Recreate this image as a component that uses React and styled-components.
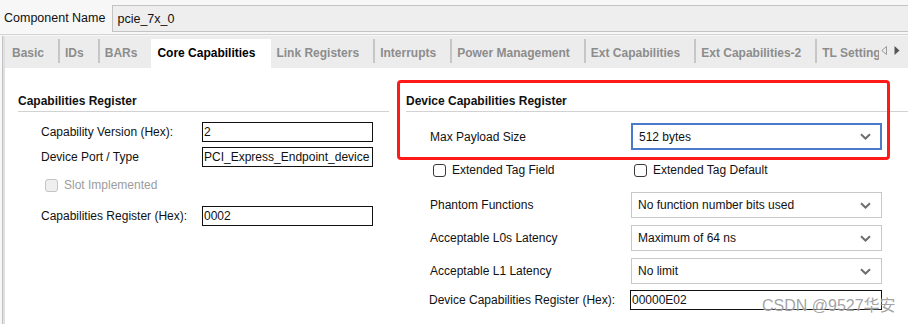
import React from "react";
import styled, { createGlobalStyle } from "styled-components";

const Global = createGlobalStyle`
  body {
    margin: 0;
    background: #f7f7f7;
    font-family: "Liberation Sans", Arial, sans-serif;
    font-size: 12px;
    color: #111;
  }
`;

const Window = styled.div`
  position: relative;
  width: 908px;
  height: 324px;
  overflow: hidden;
  display: flex;
  flex-direction: column;
  background: #f7f7f7;
`;

const NameBar = styled.div`
  display: flex;
  align-items: flex-start;
  height: 35px;
  padding: 5px 0 0 4px;
  box-sizing: border-box;
  border-bottom: 1px solid #d4d4d4;
`;

const NameLabel = styled.span`
  font-size: 12.5px;
  line-height: 27px;
  color: #111;
`;

const NameInput = styled.div`
  flex: 1;
  margin-left: 7px;
  height: 27px;
  box-sizing: border-box;
  display: flex;
  align-items: center;
  padding-left: 4px;
  background: #eeeeee;
  border: 1px solid #c3c3c3;
  border-right: none;
  font-size: 12.5px;
`;

const Panel = styled.div`
  flex: 1;
  margin-top: 1px;
  margin-left: 2px;
  display: flex;
  flex-direction: column;
  border-left: 1px solid #c2c2c2;
  box-shadow: inset 2px 0 0 #e0e0e0;
  background: #fff;
`;

const TabBar = styled.div`
  display: flex;
  height: 32px;
  box-sizing: border-box;
  padding-top: 3px;
  padding-left: 4px;
  background: #ececec;
  box-shadow: inset 2px 0 0 #e0e0e0;
`;

const TabStrip = styled.div`
  flex: 1;
  min-width: 0;
  display: flex;
  align-items: flex-start;
  overflow: hidden;
`;

const Tab = styled.div`
  flex: none;
  height: 29px;
  display: flex;
  align-items: center;
  padding: 0 ${(p) => (p.$active ? "16px" : "14px")} 2px
    ${(p) => (p.$active ? "6px" : "5px")};
  box-sizing: border-box;
  font-size: 12px;
  font-weight: bold;
  white-space: nowrap;
  color: ${(p) => (p.$active ? "#000" : "#8c8c8c")};
  background: ${(p) => (p.$active ? "#fff" : "transparent")};
`;

const Separator = styled.div`
  flex: none;
  width: 2px;
  height: 24px;
  background: #c6c6c6;
`;

const Arrows = styled.div`
  flex: none;
  width: 29px;
  display: flex;
  align-items: center;
  gap: 7px;
  padding-left: 2px;
  padding-bottom: 6px;
  box-sizing: border-box;
`;

const Content = styled.div`
  flex: 1;
  display: flex;
  gap: 17px;
  padding: 26px 0 0 15px;
`;

const Column = styled.div`
  display: flex;
  flex-direction: column;
  width: ${(p) => p.$width || "auto"};
  flex: ${(p) => (p.$grow ? 1 : "none")};
`;

const Heading = styled.div`
  font-weight: bold;
  line-height: 14px;
  padding-bottom: 3px;
  border-bottom: 1px solid #d2d2d2;
`;

const Row = styled.div`
  display: flex;
  align-items: center;
  margin-top: ${(p) => p.$gap}px;
  padding-left: ${(p) => p.$indent}px;
`;

const Label = styled.span`
  flex: none;
  width: ${(p) => p.$width}px;
  white-space: nowrap;
`;

const TextBox = styled.div`
  width: ${(p) => p.$width}px;
  height: 20px;
  box-sizing: border-box;
  border: 1px solid #111;
  padding-left: 1px;
  display: flex;
  align-items: center;
  overflow: hidden;
  white-space: nowrap;
  font-size: 12px;
`;

const Select = styled.div`
  width: 251px;
  height: ${(p) => (p.$focus ? 27 : 26)}px;
  box-sizing: border-box;
  border: ${(p) => (p.$focus ? "2px solid #4a7bc8" : "1px solid #c8c8c8")};
  display: flex;
  align-items: center;
  justify-content: space-between;
  padding: 0 ${(p) => (p.$focus ? 9 : 10)}px 0 6px;
  background: #fff;
`;

const CheckGroup = styled.label`
  display: flex;
  align-items: center;
  gap: 6px;
  width: ${(p) => (p.$width ? `${p.$width}px` : "auto")};
  padding-left: ${(p) => p.$pad || 0}px;
  box-sizing: border-box;
  color: ${(p) => (p.$disabled ? "#9c9c9c" : "#111")};
`;

const Box = styled.span`
  width: 13px;
  height: 13px;
  box-sizing: border-box;
  border-radius: 3px;
  border: 1px solid ${(p) => (p.$disabled ? "#c4c4c4" : "#3a3a3a")};
  background: ${(p) => (p.$disabled ? "#efefef" : "#fff")};
`;

const Highlight = styled.div`
  position: absolute;
  left: 397px;
  top: 80px;
  width: 493px;
  height: 80px;
  box-sizing: border-box;
  border: 3px solid #ff1a1a;
  border-radius: 4px;
  pointer-events: none;
`;

const Watermark = styled.div`
  position: absolute;
  left: 762px;
  top: 297px;
  font-family: "Liberation Sans", "Noto Sans CJK SC", sans-serif;
  font-size: 16px;
  line-height: 18px;
  color: rgba(140, 140, 140, 0.8);
  text-shadow: 0 0 2px #fff;
  white-space: nowrap;
`;

const Chevron = () => (
  <svg width="11" height="7" viewBox="0 0 11 7">
    <path d="M1 1.2 L5.5 5.5 L10 1.2" fill="none" stroke="#6e6e6e" strokeWidth="2" />
  </svg>
);

const tabs = [
  "Basic",
  "IDs",
  "BARs",
  "Core Capabilities",
  "Link Registers",
  "Interrupts",
  "Power Management",
  "Ext Capabilities",
  "Ext Capabilities-2",
  "TL Settings",
];
const activeTab = 3;

const selects = [
  { label: "Phantom Functions", value: "No function number bits used", gap: 12 },
  { label: "Acceptable L0s Latency", value: "Maximum of 64 ns", gap: 7 },
  { label: "Acceptable L1 Latency", value: "No limit", gap: 7 },
];

export default function App() {
  return (
    <Window>
      <Global />
      <NameBar>
        <NameLabel>Component Name</NameLabel>
        <NameInput>pcie_7x_0</NameInput>
      </NameBar>
      <Panel>
        <TabBar>
          <TabStrip>
            {tabs.map((t, i) => (
              <React.Fragment key={t}>
                {i > 0 && i !== activeTab && i !== activeTab + 1 && <Separator />}
                <Tab $active={i === activeTab}>{t}</Tab>
              </React.Fragment>
            ))}
          </TabStrip>
          <Arrows>
            <svg width="6" height="9" viewBox="0 0 6 9">
              <path d="M5.5 0.5 L0.8 4.5 L5.5 8.5 Z" fill="none" stroke="#9a9a9a" strokeWidth="1" />
            </svg>
            <svg width="6" height="9" viewBox="0 0 6 9">
              <path d="M0.5 0 L5.5 4.5 L0.5 9 Z" fill="#555" />
            </svg>
          </Arrows>
        </TabBar>
        <Content>
          <Column $width="371px">
            <Heading>Capabilities Register</Heading>
            <Row $gap={10} $indent={23}>
              <Label $width={161}>Capability Version (Hex):</Label>
              <TextBox $width={171}>2</TextBox>
            </Row>
            <Row $gap={5} $indent={23}>
              <Label $width={161}>Device Port / Type</Label>
              <TextBox $width={171}>PCI_Express_Endpoint_device</TextBox>
            </Row>
            <Row $gap={8} $indent={27} style={{ height: 20 }}>
              <CheckGroup $disabled>
                <Box $disabled />
                Slot Implemented
              </CheckGroup>
            </Row>
            <Row $gap={11} $indent={23}>
              <Label $width={161}>Capabilities Register (Hex):</Label>
              <TextBox $width={171}>0002</TextBox>
            </Row>
          </Column>
          <Column $grow>
            <Heading>Device Capabilities Register</Heading>
            <Row $gap={11} $indent={24}>
              <Label $width={201}>Max Payload Size</Label>
              <Select $focus>
                512 bytes
                <Chevron />
              </Select>
            </Row>
            <Row $gap={10} $indent={24} style={{ height: 20 }}>
              <CheckGroup $width={201} $pad={3}>
                <Box />
                Extended Tag Field
              </CheckGroup>
              <CheckGroup $pad={3}>
                <Box />
                Extended Tag Default
              </CheckGroup>
            </Row>
            {selects.map((s) => (
              <Row key={s.label} $gap={s.gap} $indent={24}>
                <Label $width={201}>{s.label}</Label>
                <Select>
                  {s.value}
                  <Chevron />
                </Select>
              </Row>
            ))}
            <Row $gap={6} $indent={23}>
              <Label $width={201}>Device Capabilities Register (Hex):</Label>
              <TextBox $width={252}>00000E02</TextBox>
            </Row>
          </Column>
        </Content>
      </Panel>
      <Highlight />
      <Watermark>CSDN @9527华安</Watermark>
    </Window>
  );
}
